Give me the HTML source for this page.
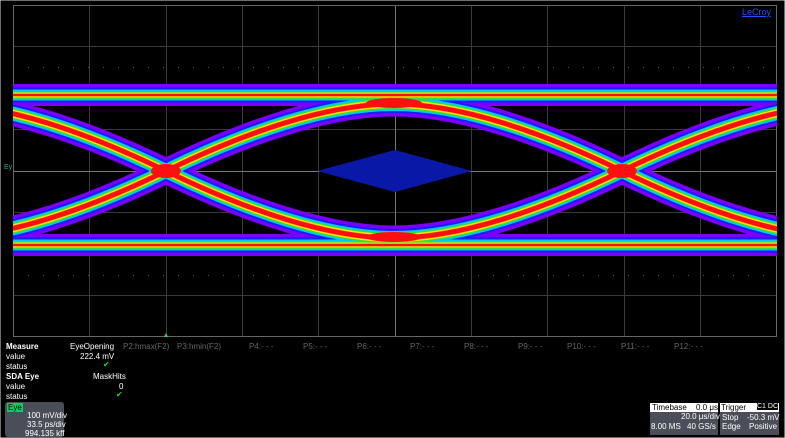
<!DOCTYPE html><html><head><style>
body{margin:0;width:785px;height:438px;background:#000;overflow:hidden;font-family:"Liberation Sans",sans-serif;position:relative}
.t{position:absolute;font-size:8px;color:#fff;white-space:nowrap}
.g{color:#666}
.b{font-weight:bold}
</style></head><body>
<svg width="785" height="438" style="position:absolute;left:0;top:0">
<rect x="0" y="0" width="785" height="438" fill="#000"/>
<rect x="0" y="0" width="785" height="438" fill="none" stroke="#ddd" stroke-width="1"/>
<g stroke="#3a3a3a" stroke-width="1">
<line x1="89.5" y1="5" x2="89.5" y2="337"/><line x1="166.5" y1="5" x2="166.5" y2="337"/><line x1="242.5" y1="5" x2="242.5" y2="337"/><line x1="318.5" y1="5" x2="318.5" y2="337"/><line x1="471.5" y1="5" x2="471.5" y2="337"/><line x1="547.5" y1="5" x2="547.5" y2="337"/><line x1="624.5" y1="5" x2="624.5" y2="337"/><line x1="700.5" y1="5" x2="700.5" y2="337"/>
<line x1="13" y1="46.5" x2="777" y2="46.5"/><line x1="13" y1="88.5" x2="777" y2="88.5"/><line x1="13" y1="129.5" x2="777" y2="129.5"/><line x1="13" y1="212.5" x2="777" y2="212.5"/><line x1="13" y1="254.5" x2="777" y2="254.5"/><line x1="13" y1="295.5" x2="777" y2="295.5"/>
</g>
<g stroke="#777"><line x1="395.5" y1="5" x2="395.5" y2="337"/><line x1="13" y1="171.5" x2="777" y2="171.5"/></g>
<g stroke="#555" stroke-dasharray="1 14"><line x1="13" y1="67.5" x2="777" y2="67.5"/><line x1="13" y1="275.5" x2="777" y2="275.5"/></g>
<rect x="13.5" y="5.5" width="763" height="331" fill="none" stroke="#666"/>
<defs><clipPath id="c"><rect x="13" y="5" width="764" height="332"/></clipPath>
<g id="tx">
<path d="M-62 238 C2 238 82 212 166 171 C250 130 330 104 394 104 C458 104 538 130 622 171 C706 212 786 238 850 238"/>
<path d="M-62 104 C2 104 82 130 166 171 C250 212 330 238 394 238 C458 238 538 212 622 171 C706 130 786 104 850 104"/>
</g>
<g id="rl"><path d="M0 95 L790 95"/><path d="M0 245 L790 245"/></g>
</defs>
<g clip-path="url(#c)" fill="none">
<use href="#rl" stroke="#7a00ff" stroke-width="22"/>
<use href="#tx" stroke="#7a00ff" stroke-width="25"/>
<use href="#rl" stroke="#1a1aff" stroke-width="15"/>
<use href="#tx" stroke="#1a1aff" stroke-width="18"/>
<use href="#rl" stroke="#00c8ff" stroke-width="11"/>
<use href="#tx" stroke="#00c8ff" stroke-width="14"/>
<use href="#rl" stroke="#30e040" stroke-width="8"/>
<use href="#tx" stroke="#30e040" stroke-width="11"/>
<use href="#rl" stroke="#ffe000" stroke-width="5"/>
<use href="#tx" stroke="#ffe000" stroke-width="8"/>
<use href="#rl" stroke="#ff1010" stroke-width="2.5"/>
<use href="#tx" stroke="#ff1010" stroke-width="5"/>
<g fill="#ff1010"><ellipse cx="166" cy="171" rx="15" ry="7"/><ellipse cx="622" cy="171" rx="15" ry="7"/><ellipse cx="394" cy="103" rx="28" ry="5"/><ellipse cx="394" cy="237" rx="28" ry="5"/></g>
</g>
<polygon points="317,171 395,150 472,171 395,192" fill="#0a18a8"/>
<polygon points="164,337 168,337 166,333" fill="#2c8"/>
</svg>
<div class="t" style="left:742px;top:7px;color:#2050ff;text-decoration:underline;font-size:9px">LeCroy</div>
<div class="t" style="left:4px;top:164px;color:#2a9;font-size:7px">Ey</div>
<div class="t b" style="left:6px;top:342px">Measure</div>
<div class="t" style="left:70px;top:342px">EyeOpening</div>
<div class="t g" style="left:123px;top:342px">P2:hmax(F2)</div>
<div class="t g" style="left:177px;top:342px">P3:hmin(F2)</div>
<div class="t g" style="left:249px;top:342px">P4:- - -</div>
<div class="t g" style="left:303px;top:342px">P5:- - -</div>
<div class="t g" style="left:357px;top:342px">P6:- - -</div>
<div class="t g" style="left:410px;top:342px">P7:- - -</div>
<div class="t g" style="left:464px;top:342px">P8:- - -</div>
<div class="t g" style="left:518px;top:342px">P9:- - -</div>
<div class="t g" style="left:567px;top:342px">P10:- - -</div>
<div class="t g" style="left:621px;top:342px">P11:- - -</div>
<div class="t g" style="left:674px;top:342px">P12:- - -</div>
<div class="t" style="left:6px;top:352px">value</div>
<div class="t" style="left:80px;top:352px">222.4 mV</div>
<div class="t" style="left:6px;top:362px">status</div>
<div class="t" style="left:103px;top:360px;color:#2d2">✔</div>
<div class="t b" style="left:6px;top:372px">SDA Eye</div>
<div class="t" style="left:93px;top:372px">MaskHits</div>
<div class="t" style="left:119px;top:382px">0</div>
<div class="t" style="left:6px;top:382px">value</div>
<div class="t" style="left:6px;top:392px">status</div>
<div class="t" style="left:116px;top:390px;color:#2d2">✔</div>
<div style="position:absolute;left:5px;top:402px;width:59px;height:35px;background:#4a4e58;border-radius:3px"></div>
<div class="t" style="left:7px;top:403px;background:#1c6;color:#000;padding:0 1px">Eye</div>
<div class="t" style="left:27px;top:411px">100 mV/div</div>
<div class="t" style="left:27px;top:420px">33.5 ps/div</div>
<div class="t" style="left:25px;top:429px">994.135 kff</div>
<div style="position:absolute;left:650px;top:403px;width:68px;height:32px;background:#4a4e58"></div>
<div style="position:absolute;left:650px;top:403px;width:68px;height:9px;background:#fff"></div>
<div class="t" style="left:652px;top:403px;color:#000">Timebase</div>
<div class="t" style="left:696px;top:403px;color:#000">0.0 μs</div>
<div class="t" style="left:681px;top:412px">20.0 μs/div</div>
<div class="t" style="left:651px;top:422px">8.00 MS</div>
<div class="t" style="left:687px;top:422px">40 GS/s</div>
<div style="position:absolute;left:720px;top:403px;width:59px;height:32px;background:#4a4e58"></div>
<div style="position:absolute;left:720px;top:403px;width:59px;height:9px;background:#fff"></div>
<div class="t" style="left:721px;top:403px;color:#000">Trigger</div>
<div class="t" style="left:757px;top:403px;background:#000;font-size:7px">C1 DC</div>
<div class="t" style="left:722px;top:413px">Stop</div>
<div class="t" style="left:747px;top:413px">-50.3 mV</div>
<div class="t" style="left:722px;top:422px">Edge</div>
<div class="t" style="left:749px;top:422px">Positive</div>
</body></html>
